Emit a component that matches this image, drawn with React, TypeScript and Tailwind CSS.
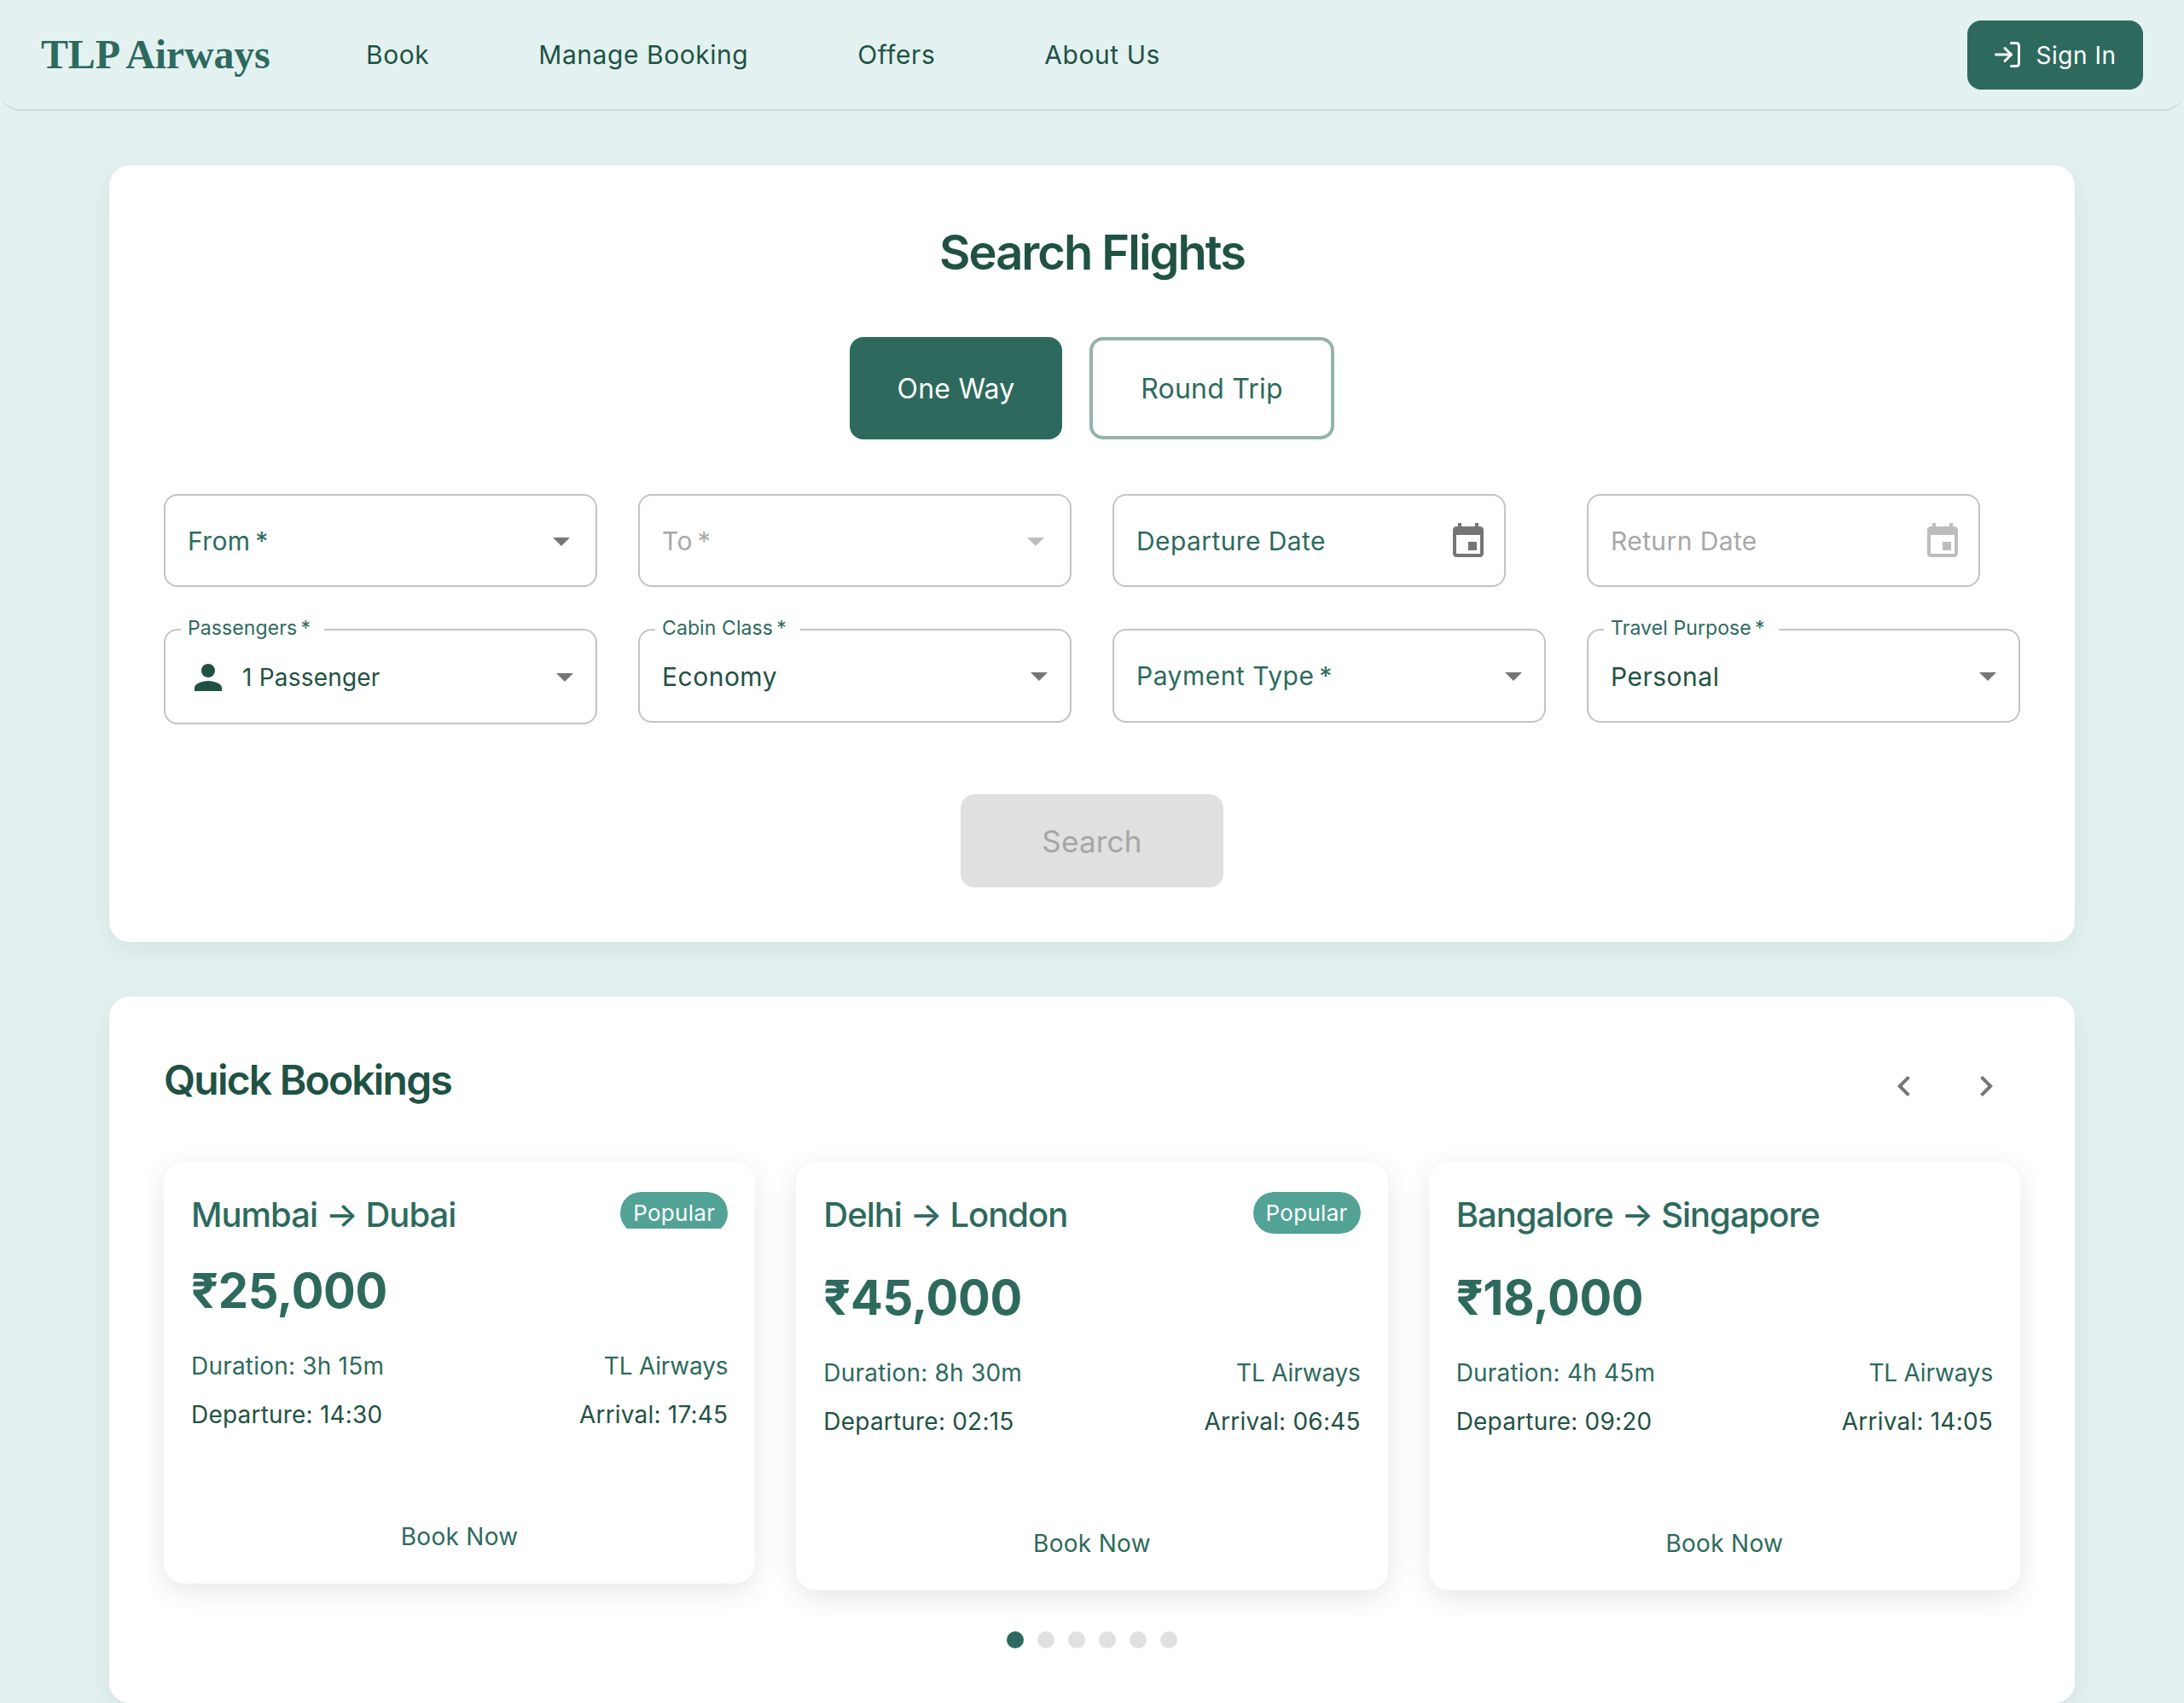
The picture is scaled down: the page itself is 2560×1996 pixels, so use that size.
import React from 'react';
import { LogIn } from 'lucide-react';

const Caret = ({ disabled = false }: { disabled?: boolean }) => (
  <svg viewBox="0 0 24 24" className={`w-[48px] h-[48px] shrink-0 ${disabled ? 'text-[#bdbdbd]' : 'text-[#757575]'}`} fill="currentColor">
    <path d="M7 10l5 5 5-5z" />
  </svg>
);

const CalendarIcon = ({ disabled = false }: { disabled?: boolean }) => (
  <svg viewBox="0 0 24 24" className={`w-[48px] h-[48px] shrink-0 mt-[2px] ${disabled ? 'text-[#bdbdbd]' : 'text-[#757575]'}`} fill="currentColor">
    <path d="M17 12h-5v5h5v-5zM16 1v2H8V1H6v2H5c-1.11 0-1.99.9-1.99 2L3 19c0 1.1.89 2 2 2h14c1.1 0 2-.9 2-2V5c0-1.1-.9-2-2-2h-1V1h-2zm3 18H5V8h14v11z" />
  </svg>
);

const PersonIcon = () => (
  <svg viewBox="0 0 24 24" className="w-[48px] h-[48px] shrink-0 text-[#1f5244]" fill="currentColor">
    <path d="M12 12c2.21 0 4-1.79 4-4s-1.79-4-4-4-4 1.79-4 4 1.79 4 4 4zm0 2c-2.67 0-8 1.34-8 4v2h16v-2c0-2.66-5.33-4-8-4z" />
  </svg>
);

const PlainField = ({ label, disabled = false, date = false }: { label: string; disabled?: boolean; date?: boolean }) => (
  <div className={`h-[109px] rounded-[16px] border-2 border-[#c4c4c4] flex items-center justify-between pl-[26px] ${date ? 'w-[461px] pr-[18px]' : 'pr-[16px]'}`}>
    <span className={`text-[30px] tracking-[0.4px] pt-[1px] ${disabled ? 'text-[#a8a8a8]' : 'text-[#2d6a5d]'}`}>{label}</span>
    {date ? <CalendarIcon disabled={disabled} /> : <Caret disabled={disabled} />}
  </div>
);

const LabeledField = ({ label, children, className = 'h-[110px]' }: { label: string; children: React.ReactNode; className?: string }) => (
  <div className={`relative rounded-[16px] border-2 border-[#c4c4c4] flex items-center justify-between pl-[26px] ${className}`}>
    <span className="absolute -top-[17px] left-[18px] bg-white pl-[8px] pr-[16px] text-[23px] leading-[28px] tracking-[0.1px] text-[#2d6a5d]">{label}</span>
    {children}
  </div>
);

const bookings = [
  { route: 'Mumbai → Dubai', price: '₹25,000', duration: '3h 15m', dep: '14:30', arr: '17:45', popular: true, clipped: true },
  { route: 'Delhi → London', price: '₹45,000', duration: '8h 30m', dep: '02:15', arr: '06:45', popular: true, clipped: false },
  { route: 'Bangalore → Singapore', price: '₹18,000', duration: '4h 45m', dep: '09:20', arr: '14:05', popular: false, clipped: false },
];

export default function App() {
  return (
    <div className="min-h-[1996px] bg-[#e3f2f1] font-['Inter',sans-serif] text-[#1f5244] overflow-hidden">
      {/* Navbar */}
      <nav className="h-[130px] rounded-b-[24px] border-b-2 border-[#cfdcda] flex items-center justify-between pl-[48px] pr-[48px]">
        <div className="flex items-center">
          <span className="font-['Liberation_Serif',serif] font-bold text-[48px] tracking-[-0.2px] text-[#2d6a5d] w-[270px] whitespace-nowrap">TLP Airways</span>
          <div className="ml-[111px] flex items-center gap-[128px] text-[30px] tracking-[0.55px] text-[#1f5244]">
            <span>Book</span>
            <span>Manage Booking</span>
            <span>Offers</span>
            <span>About Us</span>
          </div>
        </div>
        <button className="w-[206px] h-[81px] rounded-[16px] bg-[#2d6a5d] text-white text-[28px] tracking-[0.5px] flex items-center justify-center gap-[16px] pr-[3px]">
          <LogIn className="w-[36px] h-[36px]" strokeWidth={2} />
          <span className="pt-[1px]">Sign In</span>
        </button>
      </nav>

      <main className="mx-[128px] mt-[64px] flex flex-col gap-[64px]">
        {/* Search */}
        <section className="h-[910px] rounded-[24px] bg-white shadow-[0_8px_32px_rgba(0,0,0,0.07)] px-[64px] pt-[66px]">
          <h1 className="text-center text-[56px] leading-[72px] font-semibold tracking-[-2px] text-[#1f5244]">Search Flights</h1>
          <div className="mt-[63px] flex justify-center gap-[32px]">
            <button className="w-[249px] h-[120px] rounded-[16px] bg-[#2d6a5d] text-white text-[32px] tracking-[0.2px] pt-[2px]">One Way</button>
            <button className="w-[287px] h-[120px] rounded-[16px] border-4 border-[#93b3ab] text-[#2d6a5d] text-[32px] tracking-[0.2px] pt-[2px]">Round Trip</button>
          </div>
          <div className="mt-[64px] grid grid-cols-4 gap-x-[48px] gap-y-[49px]">
            <PlainField label={'From\u2009*'} />
            <PlainField label={'To\u2009*'} disabled />
            <PlainField label="Departure Date" date />
            <PlainField label="Return Date" disabled date />
            <LabeledField label={'Passengers\u2009*'} className="h-[112px] pr-[12px]">
              <span className="flex items-center gap-[16px] text-[28px] tracking-[0.2px] text-[#1f5244] pt-[1px]">
                <PersonIcon />
                1 Passenger
              </span>
              <Caret />
            </LabeledField>
            <LabeledField label={'Cabin Class\u2009*'} className="h-[110px] pr-[12px] self-start">
              <span className="text-[30px] tracking-[0.5px] pt-[2px]">Economy</span>
              <Caret />
            </LabeledField>
            <div className="h-[110px] rounded-[16px] border-2 border-[#c4c4c4] flex items-center justify-between pl-[26px] pr-[12px]">
              <span className="text-[30px] tracking-[0.5px] text-[#2d6a5d] pt-[1px]">{'Payment Type\u2009*'}</span>
              <Caret />
            </div>
            <LabeledField label={'Travel Purpose\u2009*'} className="h-[110px] pr-[12px] self-start">
              <span className="text-[30px] tracking-[0.5px] pt-[2px]">Personal</span>
              <Caret />
            </LabeledField>
          </div>
          <div className="mt-[82px] flex justify-center">
            <button className="w-[308px] h-[109px] rounded-[16px] bg-[#e0e0e0] text-[#a6a6a6] text-[35px] tracking-[0.2px] pt-[2px]">Search</button>
          </div>
        </section>

        {/* Quick bookings */}
        <section className="rounded-[24px] bg-white h-[828px] shadow-[0_8px_32px_rgba(0,0,0,0.07)] px-[64px] pt-[64px]">
          <div className="h-[130px] flex items-start justify-between">
            <h2 className="text-[48px] leading-[64px] font-semibold tracking-[-1.8px] text-[#1f5244] pt-[2px]">Quick Bookings</h2>
            <div className="flex items-center gap-[48px] mr-[16px] mt-[17px] text-[#757575]">
              <svg viewBox="0 0 24 24" className="w-[48px] h-[48px]" fill="currentColor">
                <path d="M15.41 7.41L14 6l-6 6 6 6 1.41-1.41L10.83 12z" />
              </svg>
              <svg viewBox="0 0 24 24" className="w-[48px] h-[48px]" fill="currentColor">
                <path d="M10 6L8.59 7.41 13.17 12l-4.58 4.58L10 18l6-6z" />
              </svg>
            </div>
          </div>
          <div className="grid grid-cols-3 gap-[48px] items-start">
            {bookings.map((b) => (
              <div key={b.route} className={`rounded-[24px] bg-white shadow-[0_8px_32px_rgba(0,0,0,0.1)] px-[32px] pt-[35px] flex flex-col ${b.clipped ? 'h-[494px]' : 'h-[502px]'}`}>
                <div className={`flex items-start justify-between ${b.clipped ? 'h-[80px]' : 'h-[88px]'}`}>
                  <span className="-mt-[1px] text-[40px] leading-[56px] font-[550] tracking-[-1px] text-[#2d6a5d]">{b.route}</span>
                  {b.popular && (
                    <div className={`overflow-hidden rounded-t-[24px] ${b.clipped ? 'h-[43px]' : 'h-[49px] rounded-b-[24px]'}`}>
                      <span className="block h-[49px] px-[15px] rounded-[24px] bg-[#52a396] text-white text-[26px] leading-[49px] tracking-[0.3px]">Popular</span>
                    </div>
                  )}
                </div>
                <div className="text-[56px] leading-[72px] font-bold tracking-[-0.3px] text-[#2d6a5d]">{b.price}</div>
                <div className="mt-[32px] flex justify-between text-[28px] leading-[40px] tracking-[0.2px] text-[#2d6a5d]">
                  <span>Duration: {b.duration}</span>
                  <span className="tracking-[-0.2px]">TL Airways</span>
                </div>
                <div className="mt-[17px] flex justify-between text-[28px] leading-[40px] tracking-[0.2px] text-[#1f5244]">
                  <span>Departure: {b.dep}</span>
                  <span>Arrival: {b.arr}</span>
                </div>
                <div className="mt-auto mb-[35px] text-center text-[28px] leading-[40px] tracking-[0.3px] text-[#2d6a5d]">Book Now</div>
              </div>
            ))}
          </div>
          <div className="mt-[48px] flex justify-center gap-[16px]">
            <span className="w-[20px] h-[20px] rounded-full bg-[#2d6a5d]" />
            <span className="w-[20px] h-[20px] rounded-full bg-[#e0e0e0]" />
            <span className="w-[20px] h-[20px] rounded-full bg-[#e0e0e0]" />
            <span className="w-[20px] h-[20px] rounded-full bg-[#e0e0e0]" />
            <span className="w-[20px] h-[20px] rounded-full bg-[#e0e0e0]" />
            <span className="w-[20px] h-[20px] rounded-full bg-[#e0e0e0]" />
          </div>
        </section>
      </main>
    </div>
  );
}
